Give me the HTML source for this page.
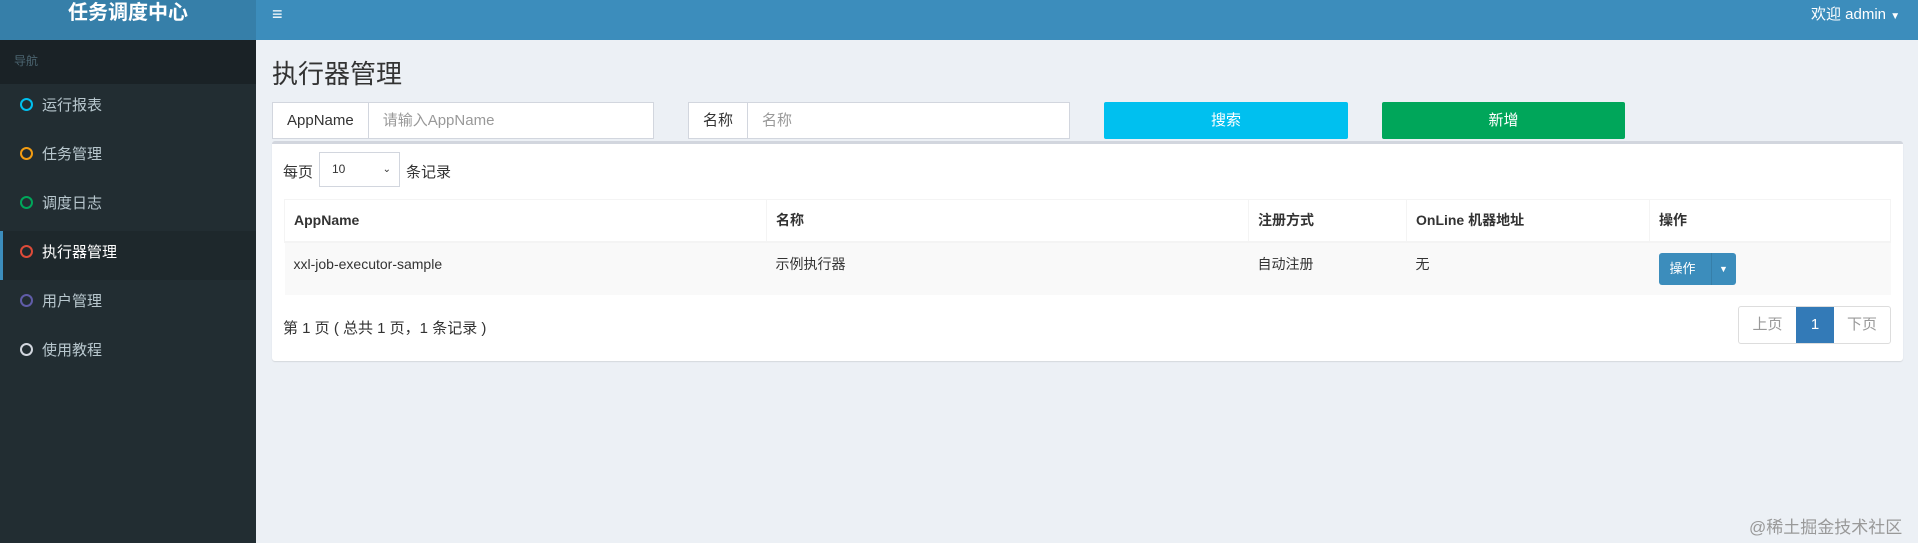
<!DOCTYPE html>
<html><head><meta charset="utf-8"><style>
*{box-sizing:border-box;margin:0;padding:0}
body{width:1918px;height:543px;overflow:hidden;background:#ecf0f5;font-family:"Liberation Sans","Noto Sans CJK SC",sans-serif;font-size:14px;color:#333;position:relative}
.logo{position:absolute;left:0;top:0;width:256px;height:40px;background:#367fa9;color:#fff;font-weight:bold;font-size:20px;text-align:center;line-height:26px}
.hdr{position:absolute;left:256px;top:0;right:0;height:40px;background:#3c8dbc;color:#fff}
.side{position:absolute;left:0;top:40px;width:256px;bottom:0;background:#222d32}
.sec{height:44px;background:#1a2226;color:#4b646f;font-size:12px;padding:12px 0 0 14px}
.item{height:49px;color:#b8c7ce;font-size:15px;line-height:44px;padding-left:20px;position:relative}
.item i{display:inline-block;width:13px;height:13px;border:2.5px solid;border-radius:50%;vertical-align:-1px;margin-right:9px}
.item.act{background:#1e282c;color:#fff;border-left:3px solid #3c8dbc;padding-left:17px}
.abs{position:absolute}
.ig{position:absolute;top:102px;height:37px;display:flex;border:1px solid #d2d6de;background:#fff}
.ig .ad{border-right:1px solid #d2d6de;background:#fff;padding:0 14px;line-height:35px;font-size:15px}
.ig .ph{color:#999;padding-left:14px;line-height:35px;font-size:15px}
.btn{position:absolute;top:102px;height:37px;color:#fff;text-align:center;line-height:37px;font-size:15px;border-radius:2px}
.box{position:absolute;left:272px;top:141px;width:1631px;height:220px;background:#fff;border-top:3px solid #d2d6de;border-radius:3px;box-shadow:0 1px 1px rgba(0,0,0,.1)}
table{position:absolute;left:12px;top:55px;width:1607px;border-collapse:collapse;font-size:14px}
th{text-align:left;height:42px;padding-left:9px;border:1px solid #f4f4f4;border-bottom:2px solid #f4f4f4;line-height:18px}
td{height:53px;padding-left:9px;vertical-align:top;padding-top:12px;background:#f9f9f9;line-height:18px}
</style></head><body>
<div class="logo">任务调度中心</div>
<div class="hdr">
<div class="abs" style="left:16px;top:4px;font-size:18px">≡</div>
<div class="abs" style="left:1555px;top:3px;font-size:15px">欢迎 admin <span style="font-size:10px">▼</span></div>
</div>
<div class="side">
<div class="sec">导航</div>
<div class="item"><i style="color:#00c0ef"></i>运行报表</div>
<div class="item"><i style="color:#f39c12"></i>任务管理</div>
<div class="item"><i style="color:#00a65a"></i>调度日志</div>
<div class="item act"><i style="color:#dd4b39"></i>执行器管理</div>
<div class="item"><i style="color:#605ca8"></i>用户管理</div>
<div class="item"><i style="color:#d2d6de"></i>使用教程</div>
</div>
<div class="abs" style="left:272px;top:54px;font-size:26px;color:#333">执行器管理</div>
<div class="ig" style="left:272px;width:382px"><div class="ad">AppName</div><div class="ph">请输入AppName</div></div>
<div class="ig" style="left:688px;width:382px"><div class="ad">名称</div><div class="ph">名称</div></div>
<div class="btn" style="left:1104px;width:244px;background:#00c0ef">搜索</div>
<div class="btn" style="left:1382px;width:243px;background:#00a65a">新增</div>
<div class="box">
<div class="abs" style="left:11px;top:17px;font-size:15px">每页</div>
<div class="abs" style="left:47px;top:8px;width:81px;height:35px;border:1px solid #d2d6de;font-size:12px;line-height:33px;padding-left:12px">10<span style="position:absolute;right:8px;font-size:10px">⌄</span></div>
<div class="abs" style="left:134px;top:17px;font-size:15px">条记录</div>
<table>
<tr><th style="width:482px">AppName</th><th style="width:482px">名称</th><th style="width:158px">注册方式</th><th style="width:243px">OnLine 机器地址</th><th>操作</th></tr>
<tr><td>xxl-job-executor-sample</td><td>示例执行器</td><td>自动注册</td><td>无</td><td style="padding-top:10px"><span style="display:inline-block;width:77px;height:32px;background:#3c8dbc;border-radius:3px;color:#fff;font-size:13px;line-height:32px;padding-left:11px;position:relative">操作<span style="position:absolute;left:52px;top:0;bottom:0;border-left:1px solid #367fa9;width:25px;text-align:center;font-size:9px">▼</span></span></td></tr>
</table>
<div class="abs" style="left:11px;top:173px;font-size:15px">第 1 页 ( 总共 1 页，1 条记录 )</div>
<div class="abs" style="left:1466px;top:162px;width:153px;height:38px;border:1px solid #ddd;border-radius:3px;display:flex;font-size:15px;color:#999;line-height:36px">
<div style="width:57px;text-align:center">上页</div><div style="width:38px;text-align:center;background:#337ab7;color:#fff">1</div><div style="flex:1;text-align:center">下页</div></div>
</div>
<div class="abs" style="left:1749px;top:513px;font-size:17px;color:#999">@稀土掘金技术社区</div>
</body></html>
